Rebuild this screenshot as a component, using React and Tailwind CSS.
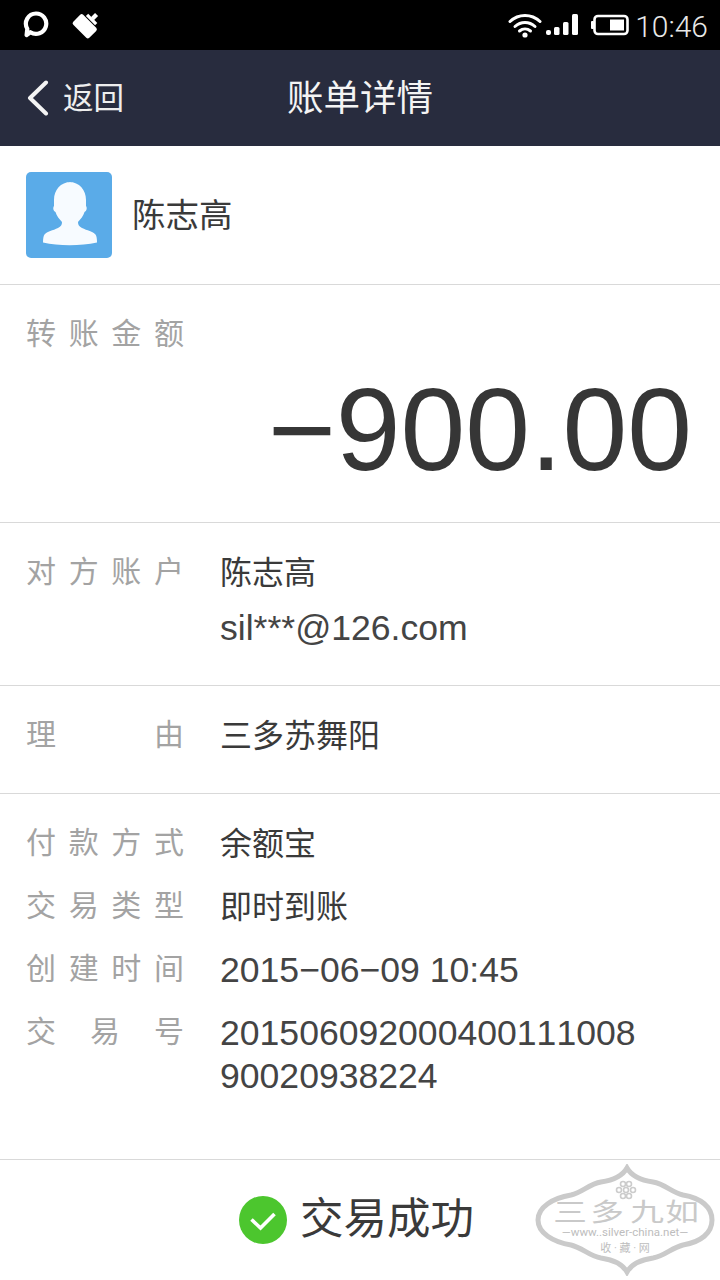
const font = { fontFamily: 'Roboto, "Noto Sans CJK SC", sans-serif' }

function StatusBar() {
  return (
    <div className="flex h-[50px] items-center bg-black pl-[23px] pr-[12px] text-white">
      <svg width="26" height="28" viewBox="0 0 26 28" className="mt-[-2px]">
        <path d="M13 3.500a10.200 10.200 0 1 1-5.600 18.700L3.600 25l.7-6.200A10.200 10.200 0 0 1 13 3.500z" fill="none" stroke="white" strokeWidth="4.200" strokeLinejoin="round" />
      </svg>
      <svg width="30" height="30" viewBox="0 0 30 30" className="ml-[22px]">
        <g transform="translate(1 -1) rotate(45 14 16) scale(1.080)" fill="white">
          <rect x="2.500" y="10" width="21" height="13" rx="2" />
          <rect x="7" y="6" width="12" height="3" />
          <rect x="11" y="1" width="4" height="5.500" />
        </g>
      </svg>
      <div className="ml-auto flex items-center">
        <svg width="34" height="28" viewBox="0 0 34 28">
          <g fill="none" stroke="white" strokeWidth="3" strokeLinecap="round">
            <path d="M2 10.500c8.500-8 21.500-8 30 0" />
            <path d="M7 15.500c5.800-5.200 14.200-5.200 20 0" />
            <path d="M11.500 20c3.200-2.600 7.800-2.600 11 0" />
          </g>
          <circle cx="17" cy="24" r="2.600" fill="white" />
        </svg>
        <svg width="35" height="26" viewBox="0 0 35 26" className="ml-[3px]" fill="white">
          <rect x="1" y="18" width="5" height="5" rx="2" />
          <rect x="9" y="15" width="5.500" height="8" rx="1.500" />
          <rect x="18" y="10" width="5.500" height="13" rx="1.500" />
          <rect x="27" y="2" width="6" height="21" rx="1.500" />
        </svg>
        <svg width="38" height="22" viewBox="0 0 38 22" className="ml-[11px]">
          <rect x="3.500" y="2" width="33" height="18" rx="3.500" fill="none" stroke="white" strokeWidth="2.600" />
          <rect x="0" y="7" width="3" height="8" rx="1" fill="white" />
          <rect x="19" y="5.500" width="14" height="11" fill="white" />
        </svg>
        <span className="ml-[6px] mt-[3px] text-[30px] font-light leading-none text-[#e8e8e8]">10:46</span>
      </div>
    </div>
  )
}

function Avatar() {
  return (
    <div className="h-[86px] w-[86px] rounded-[5px] bg-[#5aabe8]">
      <svg width="86" height="86" viewBox="0 0 86 86">
        <path d="M43 10c10.500 0 17 8 17 18v6c1.500 2 .5 5-1.500 6-1 4-4 7-6.500 10 0 3 1 4.500 4 6 5 2.500 11 3.500 13.500 6.500 1 1.500 1.500 4 1.500 8-17 3.500-38 3.500-54 0 0-4 .5-6.500 1.500-8 2.500-3 8.500-4 13.500-6.500 3-1.500 4-3 4-6-2.500-3-5.500-6-6.500-10-2-1-3-4-1.500-6v-6c0-10 6.500-18 17-18z" fill="#f7fbff" />
      </svg>
    </div>
  )
}

function Label({ text }) {
  return (
    <div className="flex w-[158px] shrink-0 justify-between text-[30px] leading-none text-[#a3a3a3]">
      {text.split('').map((c, i) => <span key={i}>{c}</span>)}
    </div>
  )
}

function Row({ label, children, className }) {
  return (
    <div className={`flex items-start ${className}`}>
      <Label text={label} />
      <div className="ml-[36px] text-[32px] text-[#3a3a3a]">{children}</div>
    </div>
  )
}

function Latin({ children, className }) {
  return <div className={`font-['Liberation_Sans'] text-[35.600px] text-[#444444] [font-kerning:none] ${className}`}>{children}</div>
}

function Watermark() {
  return (
    <svg width="182" height="112" viewBox="0 0 182 112" className="absolute left-[534px] top-[1164px]">
      <g transform="translate(1 1)">
        <path
          d="M92 3C96 10 104 15 118 17C130 19 136 27 148 30C166 33 177 42 177 55C177 68 166 77 148 80C136 83 130 91 118 93C104 95 96 100 92 107C88 100 80 95 66 93C54 91 48 83 36 80C18 77 3 68 3 55C3 42 18 33 36 30C48 27 54 19 66 17C80 15 88 10 92 3z"
          fill="white"
          fillOpacity="0.75"
          stroke="#cacaca"
          strokeWidth="5"
        />
        <g fill="#c9c9c9" style={font} textAnchor="middle">
          <text transform="translate(35 56) scale(1.350 1)" fontSize="25">三</text>
          <text transform="translate(72 56) scale(1.350 1)" fontSize="25">多</text>
          <text transform="translate(112 56) scale(1.350 1)" fontSize="25">九</text>
          <text transform="translate(147 56) scale(1.350 1)" fontSize="25">如</text>
          <text x="90" y="71" fontSize="11.500" fill="#bdbdbd">—www..silver-china.net—</text>
          <text x="90" y="87" fontSize="11" fill="#bdbdbd">收 · 藏 · 网</text>
        </g>
        <g fill="none" stroke="#cccccc" strokeWidth="1.600">
          <circle cx="88" cy="19" r="2.500" /><circle cx="94" cy="19" r="2.500" />
          <circle cx="84" cy="25" r="2.500" /><circle cx="91" cy="25" r="2.500" /><circle cx="98" cy="25" r="2.500" />
          <circle cx="88" cy="31" r="2.500" /><circle cx="94" cy="31" r="2.500" />
        </g>
      </g>
    </svg>
  )
}

export default function App() {
  return (
    <div className="relative flex h-[1280px] w-[720px] flex-col overflow-hidden bg-white" style={font}>
      <StatusBar />

      {/* nav */}
      <div className="relative flex h-[96px] items-center justify-center bg-[#282c3e] text-white">
        <div className="absolute left-[26px] flex items-center">
          <svg width="24" height="36" viewBox="0 0 24 36">
            <path d="M20 2.500 4 18l16 15.500" fill="none" stroke="#f4f4f4" strokeWidth="4" strokeLinecap="round" strokeLinejoin="round" />
          </svg>
          <span className="ml-[13px] mt-[2px] text-[30.500px] leading-none text-[#eeeeee]">返回</span>
        </div>
        <span className="mt-[2px] text-[36.500px] leading-none text-[#f4f4f4]">账单详情</span>
      </div>

      <div className="flex h-[139px] items-center border-b border-[#d9d9d9] pb-[1px] pl-[26px]">
        <Avatar />
        <span className="ml-[20px] mt-[4px] text-[33.500px] text-[#3a3a3a]">陈志高</span>
      </div>

      <div className="h-[238px] border-b border-[#d9d9d9] pl-[26px] pr-[28px] pt-[34px]">
        <Label text="转账金额" />
        <div className="mt-[6px] text-right font-['Liberation_Sans'] text-[116.500px] leading-[150px] text-[#363636]">−900.00</div>
      </div>

      <div className="h-[163px] border-b border-[#d9d9d9] pl-[26px] pt-[34px]">
        <Row label="对方账户">
          <div className="leading-[32px]">陈志高</div>
          <Latin className="mt-[21px] leading-[36px]">sil***@126.com</Latin>
        </Row>
      </div>

      <div className="h-[108px] border-b border-[#d9d9d9] pl-[26px] pt-[34px]">
        <Row label="理由">
          <div className="leading-[32px]">三多苏舞阳</div>
        </Row>
      </div>

      <div className="flex h-[366px] flex-col gap-[31px] border-b border-[#d9d9d9] pl-[26px] pt-[34px]">
        <Row label="付款方式"><div className="leading-[32px]">余额宝</div></Row>
        <Row label="交易类型"><div className="leading-[32px]">即时到账</div></Row>
        <Row label="创建时间"><Latin className="leading-[32px]">2015−06−09 10:45</Latin></Row>
        <Row label="交易号">
          <Latin className="mt-[-5px] leading-[43px]">201506092000400111008<br />90020938224</Latin>
        </Row>
      </div>

      <div className="flex flex-1 items-center justify-center pb-[1px] pr-[7px]">
        <svg width="48" height="48" viewBox="0 0 48 48">
          <circle cx="24" cy="24" r="24" fill="#4cc62e" />
          <path d="M12.500 23.500l9 8.500 14-14" fill="none" stroke="white" strokeWidth="3.600" />
        </svg>
        <span className="ml-[13px] text-[43.500px] leading-none text-[#3a3a3a]">交易成功</span>
      </div>

      <Watermark />
    </div>
  )
}
